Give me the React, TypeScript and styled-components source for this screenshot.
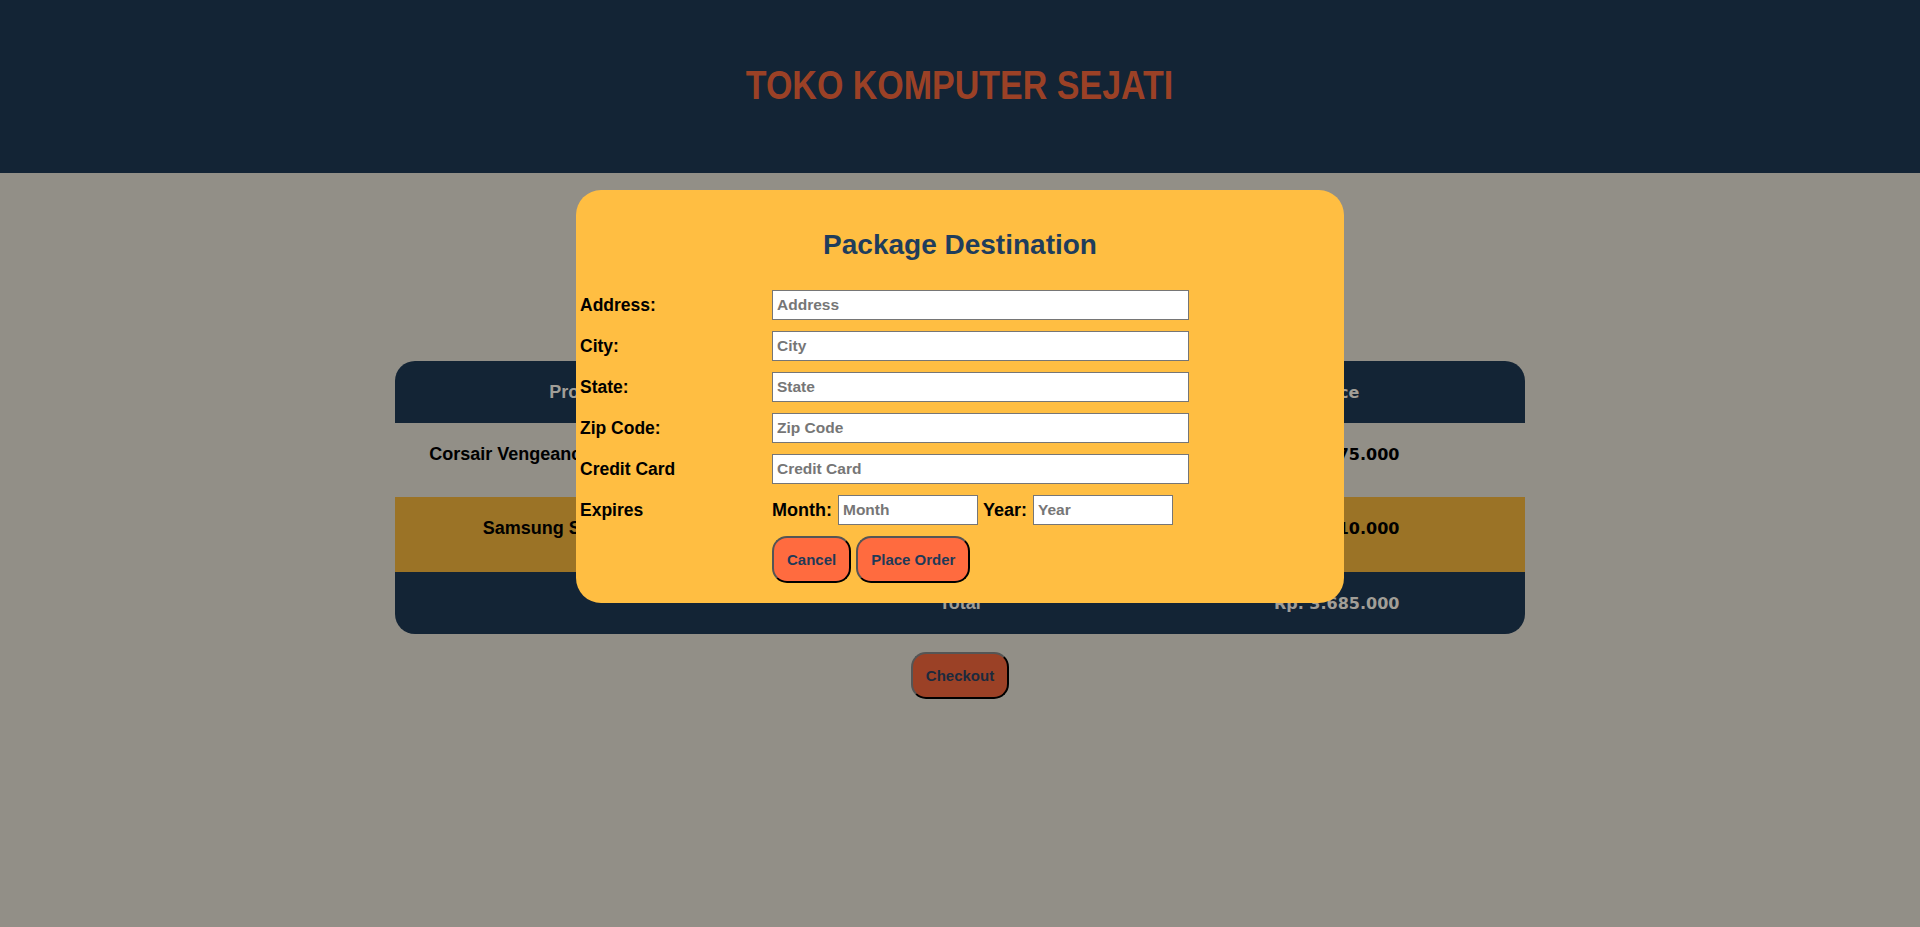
import React from "react";
import styled, { createGlobalStyle } from "styled-components";

const GlobalStyle = createGlobalStyle`
  html, body {
    margin: 0;
    padding: 0;
    background: #928f87;
    font-family: "Liberation Sans", Arial, sans-serif;
  }
  * { box-sizing: border-box; }
`;

const Page = styled.div`
  position: relative;
  min-height: 927px;
`;

const TopBar = styled.header`
  height: 173px;
  background: #132435;
  display: flex;
  align-items: center;
  justify-content: center;
`;

const ShopTitle = styled.h1`
  margin: 0 0 2px;
  display: inline-block;
  font-family: "Liberation Sans", Arial, sans-serif;
  font-weight: 700;
  font-size: 40px;
  color: #9b4126;
  transform: scaleX(0.85);
`;

const Main = styled.main`
  display: flex;
  flex-direction: column;
  align-items: center;
  padding-top: 188px;
`;

const TableFrame = styled.div`
  width: 1130px;
  border-radius: 20px;
  overflow: hidden;
`;

const CartTable = styled.table`
  width: 100%;
  border-collapse: collapse;
  table-layout: fixed;
`;

const HeadRow = styled.tr`
  background: #132435;
`;

const BodyRow = styled.tr<{ $alt?: boolean }>`
  background: ${(p) => (p.$alt ? "#9b7326" : "transparent")};
`;

const Th = styled.th<{ $price?: boolean }>`
  height: 62px;
  padding: 0;
  text-align: center;
  color: #a19e97;
  font-weight: 700;
  font-family: ${(p) => (p.$price ? '"DejaVu Sans", Verdana, sans-serif' : '"Liberation Sans", Arial, sans-serif')};
  font-size: ${(p) => (p.$price ? "16px" : "18px")};
`;

const Td = styled.td<{ $price?: boolean; $h: number }>`
  height: ${(p) => p.$h}px;
  padding: 0 0 12px;
  text-align: center;
  color: #000;
  font-weight: 700;
  font-family: ${(p) => (p.$price ? '"DejaVu Sans", Verdana, sans-serif' : '"Liberation Sans", Arial, sans-serif')};
  font-size: ${(p) => (p.$price ? "16px" : "18px")};
`;

const ActionButton = styled.button<{ $tone: "orange" | "rust" }>`
  padding: 13px 13px;
  line-height: 17px;
  border-radius: 15px;
  border: 2px solid;
  border-color: #555 #000 #000 #555;
  font-family: "Liberation Sans", Arial, sans-serif;
  font-weight: 700;
  font-size: 15px;
  cursor: pointer;
  background: ${(p) => (p.$tone === "orange" ? "#ff6b3f" : "#9b4126")};
  color: ${(p) => (p.$tone === "orange" ? "#1f3a57" : "#1b2a3d")};
`;

const CheckoutWrap = styled.div`
  margin-top: 18px;
`;

const Modal = styled.div`
  position: absolute;
  top: 190px;
  left: 50%;
  width: 768px;
  margin-left: -384px;
  background: #ffbe42;
  border-radius: 25px;
  padding: 39px 0 20px;
`;

const ModalTitle = styled.h2`
  margin: 0 0 29px;
  text-align: center;
  font-size: 28px;
  line-height: 32px;
  font-weight: 700;
  color: #1f3d5c;
`;

const FormGrid = styled.form`
  display: grid;
  grid-template-columns: 192px auto;
  row-gap: 11px;
  align-items: center;
  padding-left: 4px;
`;

const FieldLabel = styled.label`
  font-size: 17.5px;
  font-weight: 700;
  color: #000;
`;

const TextInput = styled.input<{ $w: number }>`
  width: ${(p) => p.$w}px;
  height: 30px;
  border: 1px solid #767676;
  background: #fff;
  padding: 0 4px;
  font-family: "Liberation Sans", Arial, sans-serif;
  font-weight: 700;
  font-size: 15.5px;
  color: #000;
  &::placeholder { color: #767676; }
`;

const ExpiryGroup = styled.div`
  display: flex;
  align-items: center;
  gap: 5px;
`;

const InlineLabel = styled.span`
  font-size: 18px;
  font-weight: 700;
  color: #000;
  margin-right: 1px;
`;

const ButtonRow = styled.div`
  grid-column: 2;
  display: flex;
  gap: 5px;
`;

const fields = [
  { label: "Address:", ph: "Address" },
  { label: "City:", ph: "City" },
  { label: "State:", ph: "State" },
  { label: "Zip Code:", ph: "Zip Code" },
  { label: "Credit Card", ph: "Credit Card" },
];

const items = [
  { name: "Corsair Vengeance LPX 16GB DDR4", qty: 1, price: "Rp. 1.275.000", h: 74 },
  { name: "Samsung SSD 970 EVO", qty: 1, price: "Rp. 2.410.000", h: 75 },
];

export default function App() {
  return (
    <Page>
      <GlobalStyle />
      <TopBar>
        <ShopTitle>TOKO KOMPUTER SEJATI</ShopTitle>
      </TopBar>
      <Main>
        <TableFrame>
          <CartTable>
            <thead>
              <HeadRow>
                <Th>Product</Th>
                <Th>Quantity</Th>
                <Th $price>Price</Th>
              </HeadRow>
            </thead>
            <tbody>
              {items.map((it, i) => (
                <BodyRow key={it.name} $alt={i % 2 === 1}>
                  <Td $h={it.h}>{it.name}</Td>
                  <Td $h={it.h}>{it.qty}</Td>
                  <Td $h={it.h} $price>{it.price}</Td>
                </BodyRow>
              ))}
            </tbody>
            <tfoot>
              <HeadRow>
                <Th></Th>
                <Th>Total</Th>
                <Th $price>Rp. 3.685.000</Th>
              </HeadRow>
            </tfoot>
          </CartTable>
        </TableFrame>
        <CheckoutWrap>
          <ActionButton $tone="rust">Checkout</ActionButton>
        </CheckoutWrap>
      </Main>

      <Modal>
        <ModalTitle>Package Destination</ModalTitle>
        <FormGrid onSubmit={(e) => e.preventDefault()}>
          {fields.map((f) => (
            <React.Fragment key={f.ph}>
              <FieldLabel>{f.label}</FieldLabel>
              <TextInput $w={417} placeholder={f.ph} />
            </React.Fragment>
          ))}
          <FieldLabel>Expires</FieldLabel>
          <ExpiryGroup>
            <InlineLabel>Month:</InlineLabel>
            <TextInput $w={140} placeholder="Month" />
            <InlineLabel>Year:</InlineLabel>
            <TextInput $w={140} placeholder="Year" />
          </ExpiryGroup>
          <ButtonRow>
            <ActionButton type="button" $tone="orange">Cancel</ActionButton>
            <ActionButton type="submit" $tone="orange">Place Order</ActionButton>
          </ButtonRow>
        </FormGrid>
      </Modal>
    </Page>
  );
}
